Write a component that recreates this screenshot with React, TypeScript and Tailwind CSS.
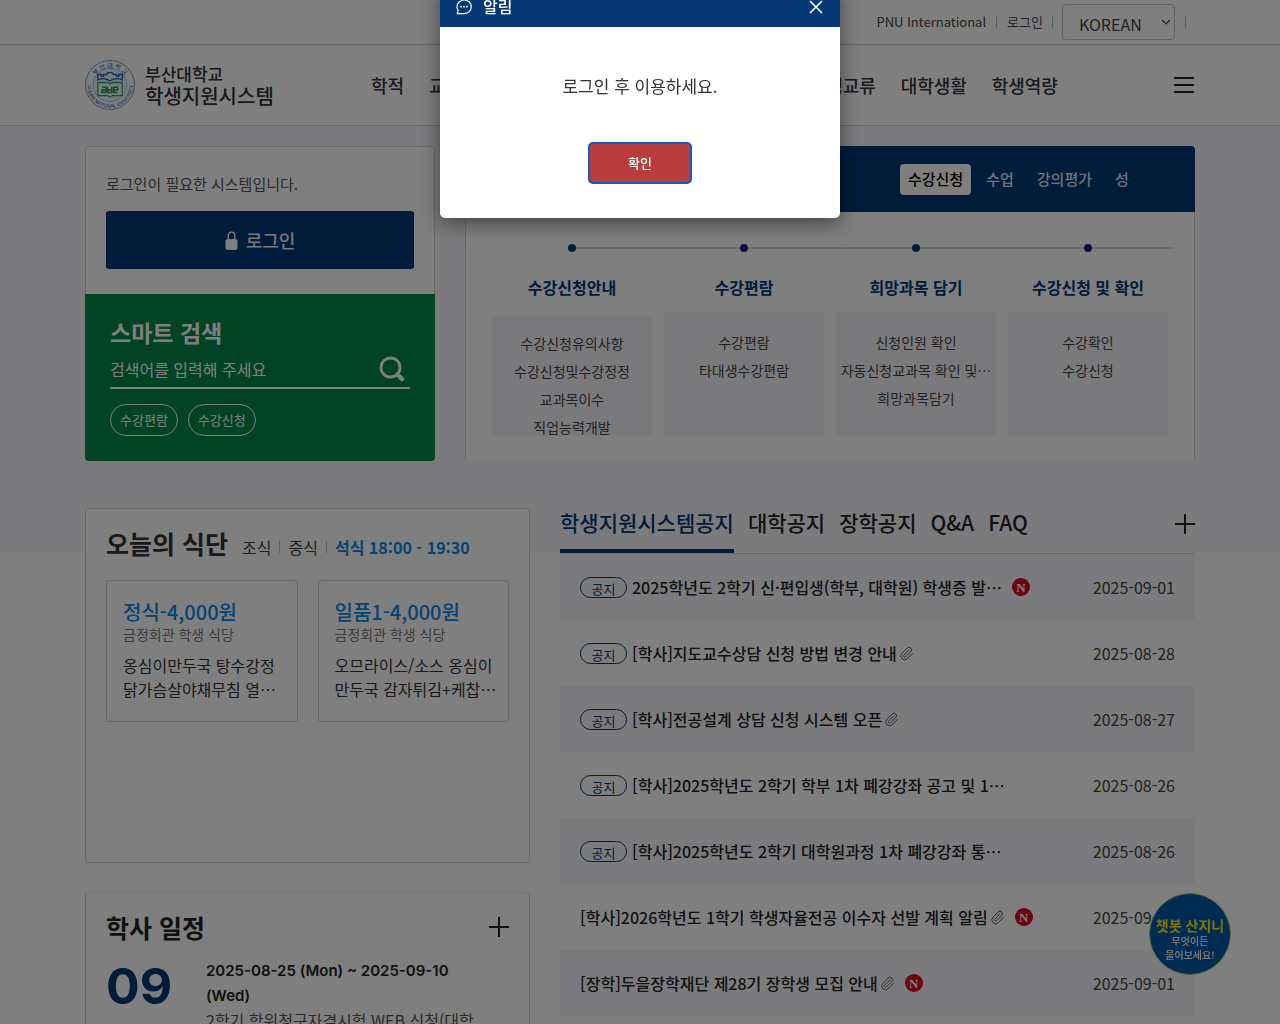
import React from "react";
import { Paperclip } from "lucide-react";

const navItems = ["학적", "교육과정", "수업", "성적", "졸업", "등록", "장학", "학생교류", "대학생활", "학생역량"];

const processTabs = ["수업", "강의평가", "성적"];

const steps = [
  {
    title: "수강신청안내",
    items: ["수강신청유의사항", "수강신청및수강정정", "교과목이수", "직업능력개발"],
  },
  { title: "수강편람", items: ["수강편람", "타대생수강편람"] },
  { title: "희망과목 담기", items: ["신청인원 확인", "자동신청교과목 확인 및…", "희망과목담기"] },
  { title: "수강신청 및 확인", items: ["수강확인", "수강신청"] },
];

const meals = [
  { name: "정식-4,000원", place: "금정회관 학생 식당", lines: ["옹심이만두국 탕수강정", "닭가슴살야채무침 열…"] },
  { name: "일품1-4,000원", place: "금정회관 학생 식당", lines: ["오므라이스/소스 옹심이", "만두국 감자튀김+케찹…"] },
];

const noticeTabs = ["대학공지", "장학공지", "Q&A", "FAQ"];

type Notice = { pinned?: boolean; title: string; file?: boolean; fresh?: boolean; date: string };

const notices: Notice[] = [
  { pinned: true, title: "2025학년도 2학기 신·편입생(학부, 대학원) 학생증 발…", fresh: true, date: "2025-09-01" },
  { pinned: true, title: "[학사]지도교수상담 신청 방법 변경 안내", file: true, date: "2025-08-28" },
  { pinned: true, title: "[학사]전공설계 상담 신청 시스템 오픈", file: true, date: "2025-08-27" },
  { pinned: true, title: "[학사]2025학년도 2학기 학부 1차 폐강강좌 공고 및 1…", date: "2025-08-26" },
  { pinned: true, title: "[학사]2025학년도 2학기 대학원과정 1차 폐강강좌 통…", date: "2025-08-26" },
  { title: "[학사]2026학년도 1학기 학생자율전공 이수자 선발 계획 알림", file: true, fresh: true, date: "2025-09-01" },
  { title: "[장학]두을장학재단 제28기 장학생 모집 안내", file: true, fresh: true, date: "2025-09-01" },
];

function Seal() {
  return (
    <svg width="50" height="50" viewBox="0 0 50 50" aria-hidden="true">
      <defs>
        <path id="sealTop" d="M7.5 25a17.5 17.5 0 0 1 35 0" />
        <path id="sealBottom" d="M2.2 21a23.1 23.1 0 1 0 45.6 0" />
      </defs>
      <circle cx="25" cy="25" r="24.5" fill="#fbfdff" stroke="#4a86bd" strokeWidth="0.8" />
      <circle cx="25" cy="25" r="16.8" fill="#eaf4fb" stroke="#7aa5cc" strokeWidth="0.6" />
      <text fontSize="6" fill="#1d4f8f">
        <textPath href="#sealTop" startOffset="50%" textAnchor="middle">부 산 대 학 교</textPath>
      </text>
      <text fontSize="5" fill="#1d4f8f">
        <textPath href="#sealBottom" startOffset="50%" textAnchor="middle">PUSAN NATIONAL UNIVERSITY</textPath>
      </text>
      <path
        d="M12.8 20v-5.5h3.4v1.8h2.2v-1.8h3.2l1.4-1.8h4l1.4 1.8h3.2v1.8h2.2v-1.8h3.4V20c-4-2-8.5-1.5-12.2 1C21.3 18.5 16.8 18 12.8 20z"
        fill="none"
        stroke="#1c5da8"
        strokeWidth="1.3"
      />
      <path d="M12.8 22.5h9.800l2.4 1.5 2.4-1.5h9.800v13.200h-10l-2.200 1.500-2.200-1.500h-10z" fill="#effaf4" stroke="#1aa568" strokeWidth="1.3" />
      <path
        d="M17 27.200h4v5.300h-4v-2.600h4M22.800 27v5.500h4V27M22.800 29.800h4M32.500 32.500h-3.800v-5.300h4v2.600h-4"
        fill="none"
        stroke="#119a5c"
        strokeWidth="1.5"
      />
    </svg>
  );
}

function PlusIcon() {
  return (
    <svg width="22" height="22" viewBox="0 0 22 22" aria-hidden="true">
      <path d="M1 11h20M11 1v20" stroke="#222" strokeWidth="2" />
    </svg>
  );
}

function TopBar() {
  return (
    <div className="border-b border-[#ccc] bg-white">
      <div className="mx-auto flex h-11 max-w-[1110px] items-center justify-end text-[13px] text-[#444]">
        <a href="#international">PNU International</a>
        <span className="mx-[10px] h-3 w-px bg-[#bbb]" />
        <a href="#login">로그인</a>
        <span className="mx-[9px] h-3 w-px bg-[#bbb]" />
        <div className="relative">
          <select
            aria-label="언어 선택"
            className="h-9 w-[113px] appearance-none rounded border border-[#c4c4c4] bg-white pl-4 pt-1 text-[16px] text-[#444]"
          >
            <option>KOREAN</option>
          </select>
          <svg className="pointer-events-none absolute right-1 top-[15px]" width="10" height="6" viewBox="0 0 10 6" aria-hidden="true">
            <path d="M1 1l4 4 4-4" fill="none" stroke="#444" strokeWidth="1.2" />
          </svg>
        </div>
        <span className="ml-[10px] mr-[9px] h-3 w-px bg-[#bbb]" />
      </div>
    </div>
  );
}

function MainHeader() {
  return (
    <header className="border-b border-[#ccc] bg-white">
      <div className="mx-auto flex h-20 max-w-[1110px] items-center">
        <a href="#home" className="flex w-[286px] shrink-0 items-center gap-[10px] text-[#333]">
          <Seal />
          <span className="flex flex-col font-medium">
            <span className="text-[17px] leading-[22px]">부산대학교</span>
            <span className="text-[20px] leading-[22px]">학생지원시스템</span>
          </span>
        </a>
        <nav className="flex w-[687px] justify-between text-[18px] font-medium text-[#333]">
          {navItems.map((item) => (
            <a key={item} href={"#" + item} className="whitespace-nowrap">
              {item}
            </a>
          ))}
        </nav>
        <button aria-label="전체 메뉴" className="ml-auto mr-px flex w-5 flex-col gap-[5px]">
          <span className="h-[2px] bg-[#222]" />
          <span className="h-[2px] bg-[#222]" />
          <span className="h-[2px] bg-[#222]" />
        </button>
      </div>
    </header>
  );
}

function LoginAndSearch() {
  return (
    <div className="flex w-[350px] shrink-0 flex-col">
      <section className="rounded-t-[4px] border border-b-0 border-[#d4d4d4] bg-white px-5 pb-[25px] pt-6">
        <p className="text-[15px] leading-[26px] text-[#555]">로그인이 필요한 시스템입니다.</p>
        <button className="mt-[14px] flex h-[58px] w-full items-center justify-center gap-2 rounded-[3px] bg-[#003876] text-[18px] font-medium text-[#e8eef6]">
          <svg width="13" height="19" viewBox="0 0 13 19" aria-hidden="true">
            <path d="M3.2 9V4.5a3.3 3.3 0 0 1 6.6 0V9" fill="none" stroke="#fff" strokeWidth="1.3" />
            <rect x="0.5" y="8" width="12" height="11" rx="2.5" fill="#fff" />
          </svg>
          로그인
        </button>
      </section>
      <section className="flex-1 rounded-b-[4px] bg-[#008848] px-[25px] pt-[21px] text-white">
        <h2 className="text-[23px] font-bold leading-[35px]">스마트 검색</h2>
        <div className="flex h-[39px] items-center border-b-2 border-white">
          <input
            aria-label="검색어"
            placeholder="검색어를 입력해 주세요"
            className="min-w-0 flex-1 bg-transparent text-[16px] text-white outline-none placeholder:text-white"
          />
          <button aria-label="검색" className="mr-[5px]">
            <svg width="26" height="26" viewBox="0 0 26 26" aria-hidden="true">
              <circle cx="11.500" cy="11.500" r="9.500" fill="none" stroke="#fff" strokeWidth="2.800" />
              <path d="M18.500 18.500l4.500 4.500" stroke="#fff" strokeWidth="4.500" strokeLinecap="round" />
            </svg>
          </button>
        </div>
        <div className="mt-[15px] flex gap-[10px]">
          <button className="h-8 rounded-full border border-white px-[9px] text-[13px]">수강편람</button>
          <button className="h-8 rounded-full border border-white px-[9px] text-[13px]">수강신청</button>
        </div>
      </section>
    </div>
  );
}

function ProcessCard() {
  return (
    <section className="min-w-0 flex-1">
      <div className="flex h-[66px] items-center justify-end rounded-t-[4px] bg-[#003876] pr-[65px]">
        <div className="flex w-[230px] gap-[7px] overflow-hidden text-[15px] font-medium">
          <button className="h-[31px] shrink-0 rounded bg-white px-2 text-black">수강신청</button>
          {processTabs.map((tab) => (
            <button key={tab} className="h-[31px] shrink-0 px-2 text-[#dce6f2]">
              {tab}
            </button>
          ))}
        </div>
      </div>
      <div className="h-[249px] border-x border-[#d4d4d4] bg-white px-5 pt-8">
        <ol className="grid grid-cols-4">
          {steps.map((step, i) => (
            <li key={step.title} className="flex flex-col">
              <div className="flex h-2 items-center">
                <span className={i === 0 ? "h-px flex-1" : "h-[2px] flex-1 bg-[#ddd]"} />
                <span className={i % 2 ? "size-2 rounded-full bg-[#2a1296]" : "size-2 rounded-full bg-[#003876]"} />
                <span className="h-[2px] flex-1 bg-[#ddd]" />
              </div>
              <h3 className="mt-5 text-center text-[16px] font-bold leading-[30px] text-[#003876]">{step.title}</h3>
              <ul
                className={
                  i === 0
                    ? "mx-[6px] mt-[14px] h-[120px] bg-[#f5f5f9] pt-[13px]"
                    : "mx-[6px] mt-[10px] h-[124px] bg-[#f5f5f9] pt-4"
                }
              >
                {step.items.map((item) => (
                  <li key={item} className="whitespace-nowrap text-center text-[14px] leading-7 text-[#444]">
                    <a href={"#" + item}>{item}</a>
                  </li>
                ))}
              </ul>
            </li>
          ))}
        </ol>
      </div>
    </section>
  );
}

function MealCard() {
  return (
    <section className="h-[355px] rounded-[3px] border border-[#d4d4d4] bg-white px-5 pt-[15px]">
      <div className="flex items-baseline">
        <h2 className="text-[25px] font-bold leading-[38px] text-[#333]">오늘의 식단</h2>
        <div className="ml-[14px] flex items-center text-[16px] leading-6 text-[#444]">
          <button>조식</button>
          <span className="mx-2 h-3 w-px bg-[#bbb]" />
          <button>중식</button>
          <span className="mx-2 h-3 w-px bg-[#bbb]" />
          <button className="font-bold text-[#0a86e4]">석식 18:00 - 19:30</button>
        </div>
      </div>
      <div className="mt-[18px] grid grid-cols-2 gap-5">
        {meals.map((meal) => (
          <article key={meal.name} className="h-[142px] rounded-[3px] border border-[#d4d4d4] px-4 pt-[18px]">
            <h3 className="whitespace-nowrap text-[20px] font-medium leading-[26px] text-[#0a86e4]">{meal.name}</h3>
            <p className="text-[14px] leading-[18px] text-[#777]">{meal.place}</p>
            <p className="mt-[10px] whitespace-nowrap text-[16px] leading-6 text-[#333]">
              {meal.lines[0]}
              <br />
              {meal.lines[1]}
            </p>
          </article>
        ))}
      </div>
    </section>
  );
}

function CalendarCard() {
  return (
    <section className="rounded-[3px] border border-t-[#eee] border-[#d4d4d4] bg-white px-5 pt-4">
      <div className="flex items-center justify-between">
        <h2 className="text-[25px] font-bold leading-9 text-[#222]">학사 일정</h2>
        <button aria-label="학사 일정 더보기" className="-mr-px">
          <PlusIcon />
        </button>
      </div>
      <div className="mt-3 flex">
        <strong className="w-[100px] shrink-0 pt-1 font-['Inter'] text-[50px] font-bold leading-[50px] text-[#003876]">09</strong>
        <div className="max-w-[278px] pt-px">
          <p className="max-w-[260px] font-['Inter'] text-[15px] font-semibold leading-[25px] text-[#222]">
            2025-08-25 (Mon) ~ 2025-09-10 (Wed)
          </p>
          <p className="break-all text-[16px] leading-6 text-[#555]">2학기 학위청구자격시험 WEB 신청(대학원)</p>
        </div>
      </div>
    </section>
  );
}

function NoticeBoard() {
  return (
    <section className="min-w-0 flex-1">
      <div className="flex h-[46px] items-start justify-between border-b border-[#d4d4d8]">
        <div className="flex gap-[14px] text-[21px] font-medium leading-7 text-[#222]">
          <button className="h-[45px] border-b-4 border-[#003876] pb-[13px] text-[#003876]">학생지원시스템공지</button>
          {noticeTabs.map((tab) => (
            <button key={tab} className="h-7">
              {tab}
            </button>
          ))}
        </div>
        <button aria-label="공지 더보기" className="-mr-px mt-[5px]">
          <PlusIcon />
        </button>
      </div>
      <ul>
        {notices.map((n) => (
          <li key={n.title} className="flex h-[66px] items-center px-5 odd:bg-[#f6f6fa]">
            {n.pinned && (
              <span className="mr-[5px] h-[21px] w-[47px] shrink-0 overflow-hidden rounded-full border border-[#003876] text-center text-[13px] leading-[22px] text-[#003876]">
                공지
              </span>
            )}
            <a href="#notice" className="truncate text-[16px] font-medium text-[#222]">
              {n.title}
            </a>
            {n.file && <Paperclip className="ml-[2px] shrink-0 text-[#555]" size={15} strokeWidth={1.5} aria-label="첨부파일" />}
            {n.fresh && (
              <span className="ml-[10px] flex size-[18px] shrink-0 items-center justify-center rounded-full bg-[#d8061e] font-['Liberation_Serif'] text-[13px] font-bold leading-none text-white">
                N
              </span>
            )}
            <time className="ml-auto text-[16px] text-[#444]">{n.date}</time>
          </li>
        ))}
      </ul>
    </section>
  );
}

function AlertDialog() {
  return (
    <div className="fixed inset-0 z-20 flex items-start justify-center bg-black/50">
      <div
        role="alertdialog"
        aria-labelledby="alert-title"
        aria-describedby="alert-text"
        className="-mt-[13px] w-[400px] overflow-hidden rounded-[5px] bg-white shadow-[0_5px_20px_rgba(0,0,0,0.5)]"
      >
        <div className="flex h-10 items-center bg-[#053875] px-4 text-white">
          <svg width="16" height="16" viewBox="0 0 16 16" aria-hidden="true">
            <path
              d="M8.200 1C12.200 1 15.300 4 15.300 7.800S12.200 14.600 8.200 14.600H1.200l1-3C1.400 10.500 1 9.200 1 7.800 1 4 4.200 1 8.200 1z"
              fill="none"
              stroke="#fff"
              strokeWidth="1.200"
              strokeLinejoin="round"
            />
            <circle cx="5" cy="7.700" r="0.900" fill="#fff" />
            <circle cx="8" cy="7.700" r="0.900" fill="#fff" />
            <circle cx="11" cy="7.700" r="0.900" fill="#fff" />
          </svg>
          <h2 id="alert-title" className="ml-[11px] pb-[2px] text-[16px] font-medium leading-6">
            알림
          </h2>
          <button aria-label="닫기" className="ml-auto">
            <svg width="16" height="16" viewBox="0 0 16 16" aria-hidden="true">
              <path d="M2 2l12 12M14 2L2 14" stroke="#fff" strokeWidth="1.600" />
            </svg>
          </button>
        </div>
        <div className="flex flex-col items-center pb-[34px] pt-[46px]">
          <p id="alert-text" className="text-[17px] leading-[26px] text-[#333]">
            로그인 후 이용하세요.
          </p>
          <button className="mt-[43px] h-[42px] w-[104px] rounded-[5px] border-2 border-[#0f5cc0] bg-[#b93d3d] text-[13px] font-medium text-white">
            확인
          </button>
        </div>
      </div>
    </div>
  );
}

export default function App() {
  return (
    <div lang="ko" className="h-screen overflow-hidden bg-white font-['Noto_Sans_CJK_KR',sans-serif]">
      <TopBar />
      <MainHeader />
      <main className="bg-[linear-gradient(#f7f7fb_426px,#ffffff_426px)] pt-5">
        <div className="mx-auto max-w-[1110px]">
          <div className="flex gap-[30px]">
            <LoginAndSearch />
            <ProcessCard />
          </div>
          <div className="mt-[47px] flex gap-[30px]">
            <div className="flex w-[445px] shrink-0 flex-col gap-[29px]">
              <MealCard />
              <CalendarCard />
            </div>
            <NoticeBoard />
          </div>
        </div>
      </main>
      <button className="fixed bottom-[49px] right-[49px] z-10 flex size-[82px] flex-col items-center justify-center rounded-full border border-[#b8d060] bg-[#0058a8] pt-[10px] text-white">
        <span className="text-[14px] font-bold leading-[18px] text-[#ffe800]">챗봇 산지니</span>
        <span className="text-[10px] font-medium leading-[14px]">무엇이든</span>
        <span className="text-[10px] font-medium leading-[14px]">물어보세요!</span>
      </button>
      <AlertDialog />
    </div>
  );
}
